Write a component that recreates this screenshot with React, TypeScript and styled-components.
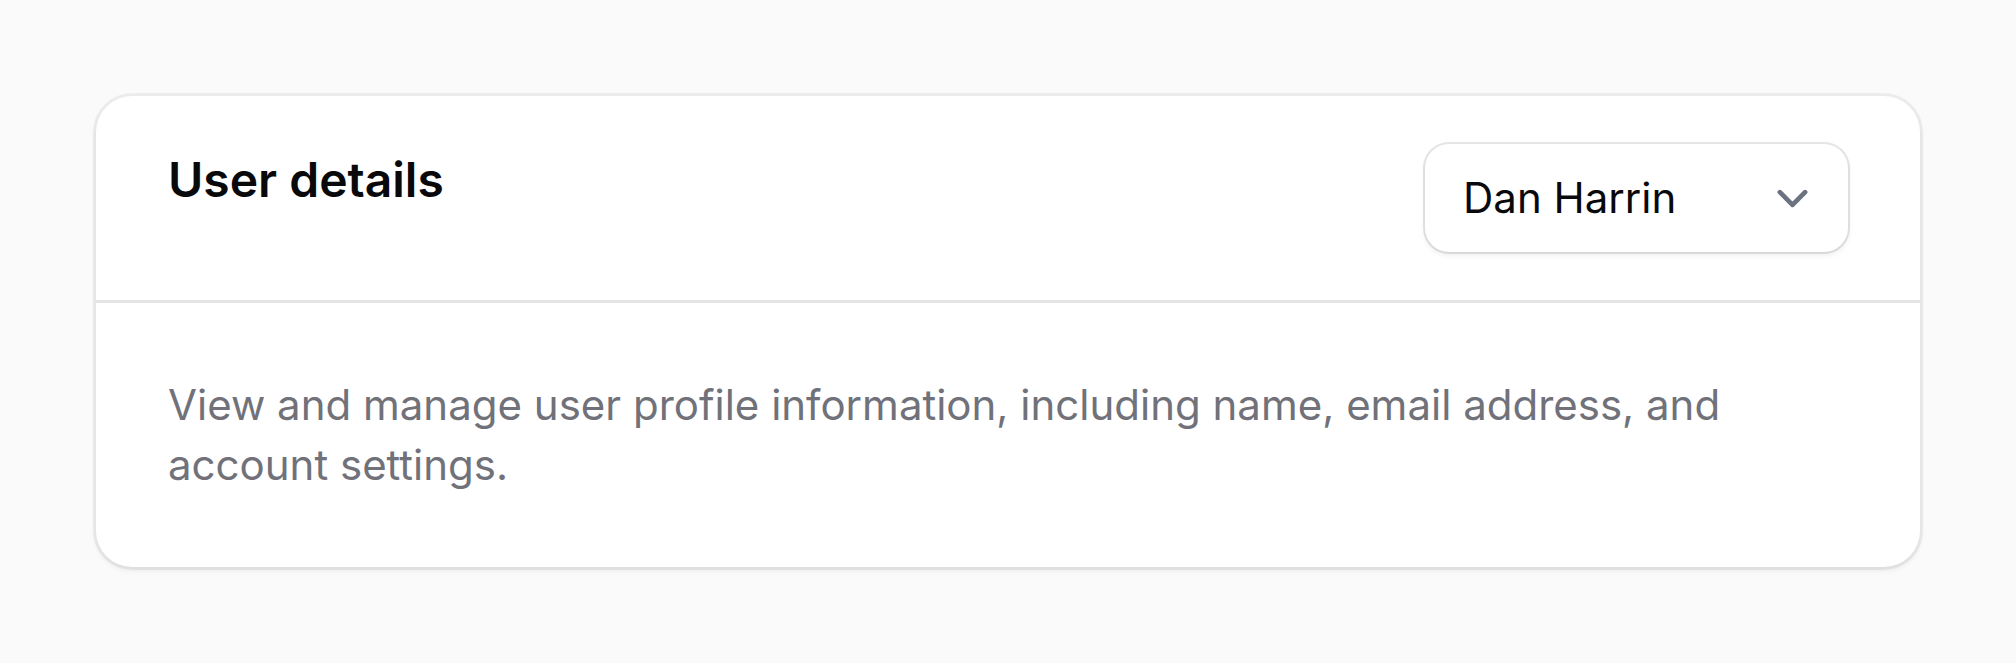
import { createGlobalStyle, styled } from "styled-components";

const GlobalStyle = createGlobalStyle`
  html, body {
    margin: 0;
    background: #fafafa;
  }

  body {
    font-family: Inter, "Noto Sans", "Liberation Sans", sans-serif;
    -webkit-font-smoothing: antialiased;
  }
`;

const Page = styled.div`
  padding: 96px;
`;

const Section = styled.section`
  background: #ffffff;
  border-radius: 36px;
  box-shadow: 0 0 0 3px rgba(9, 9, 11, 0.05), 0 3px 6px 0 rgba(0, 0, 0, 0.08);
`;

const Header = styled.header`
  display: flex;
  align-items: flex-start;
  justify-content: space-between;
  gap: 36px;
  padding: 48px 72px;
`;

const Title = styled.h3`
  margin: 0;
  font-size: 48px;
  line-height: 72px;
  font-weight: 600;
  color: #09090b;
`;

const SelectBox = styled.div`
  display: flex;
  align-items: center;
  justify-content: space-between;
  box-sizing: border-box;
  width: 423px;
  height: 108px;
  padding: 0 24px 0 38px;
  border-radius: 24px;
  background: #ffffff;
  box-shadow: 0 0 0 2px rgba(9, 9, 11, 0.1), 0 3px 6px 0 rgba(0, 0, 0, 0.08);
  font-size: 42px;
  line-height: 60px;
  color: #09090b;
  cursor: pointer;
`;

const Chevron = styled.svg`
  width: 63px;
  height: 63px;
  flex-shrink: 0;
`;

const Body = styled.div`
  border-top: 3px solid #e4e4e7;
  padding: 72px;
`;

const Description = styled.p`
  margin: 0;
  font-size: 42px;
  line-height: 60px;
  color: #71717a;
`;

export default function App() {
  return (
    <>
      <GlobalStyle />
      <Page>
        <Section>
          <Header>
            <Title>User details</Title>
            <SelectBox role="combobox">
              <span>Dan Harrin</span>
              <Chevron viewBox="0 0 20 20" fill="none">
                <path
                  d="M6 8l4 4 4-4"
                  stroke="#6b7280"
                  strokeWidth="1.5"
                  strokeLinecap="round"
                  strokeLinejoin="round"
                />
              </Chevron>
            </SelectBox>
          </Header>
          <Body>
            <Description>
              View and manage user profile information, including name, email address, and
              account settings.
            </Description>
          </Body>
        </Section>
      </Page>
    </>
  );
}
